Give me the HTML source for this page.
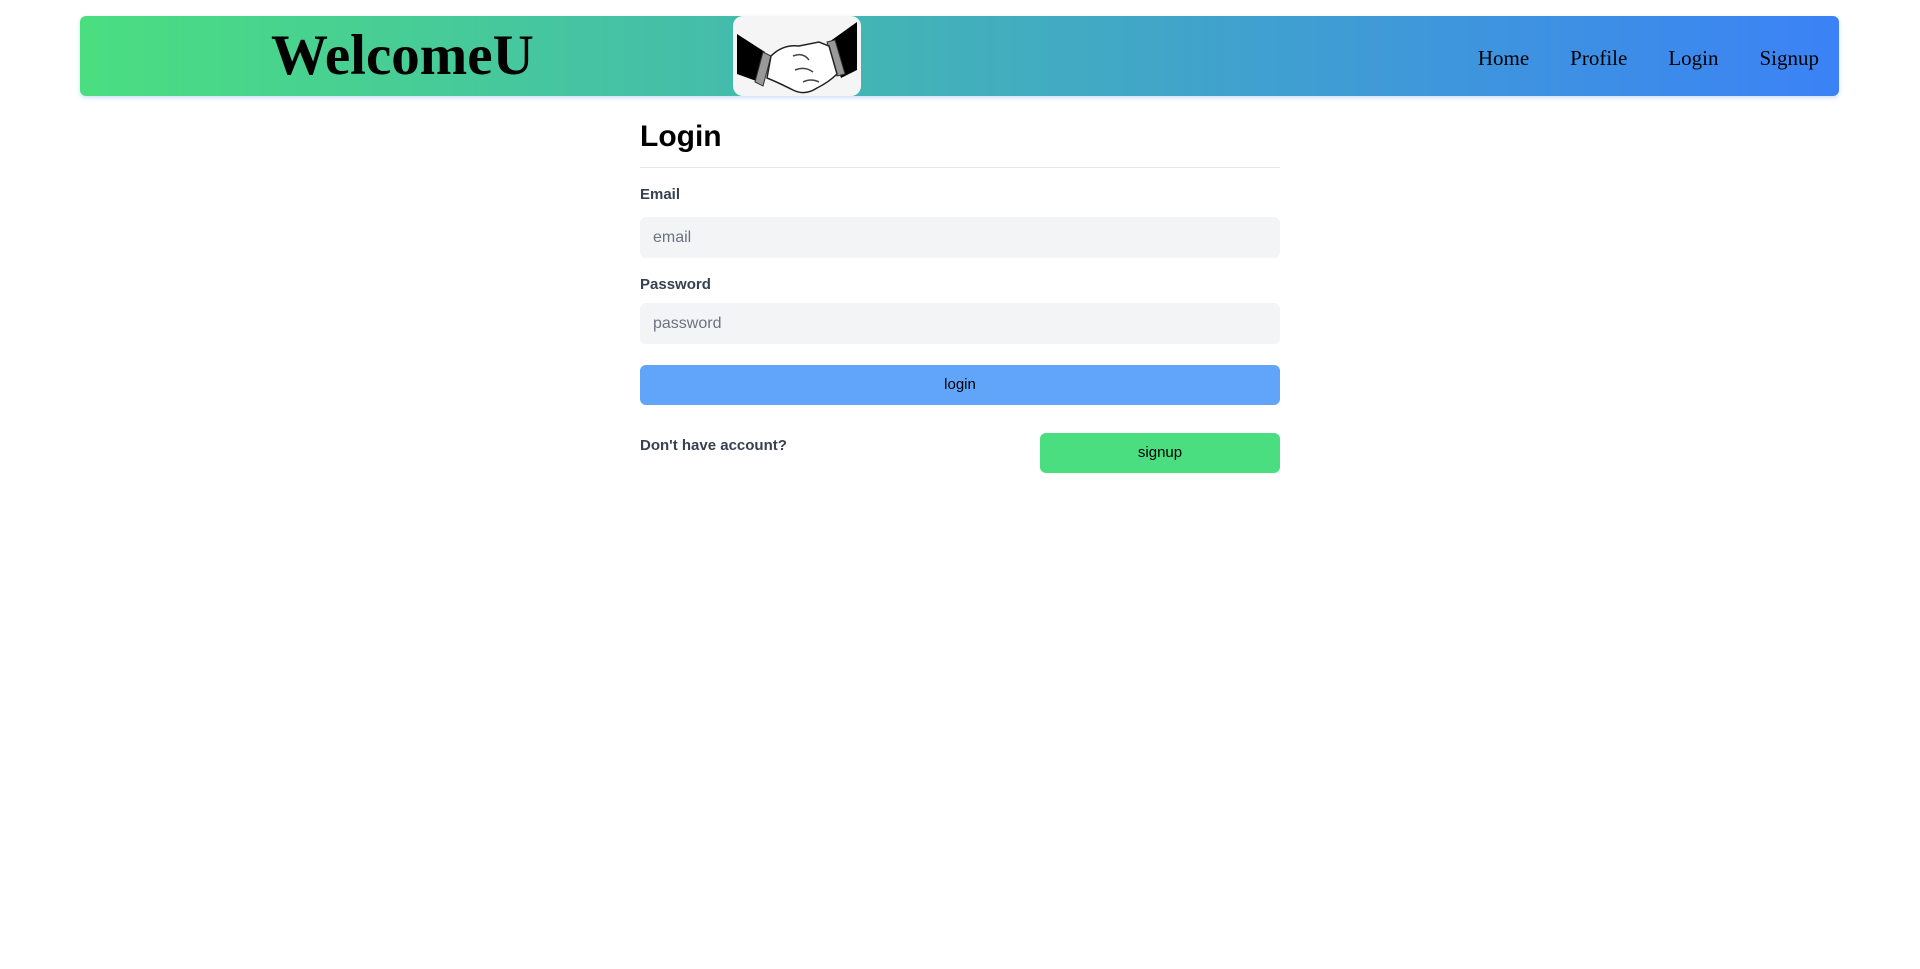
<!DOCTYPE html>
<html><head><meta charset="utf-8"><style>
*{box-sizing:border-box;margin:0;padding:0}
body{width:1920px;height:969px;background:#fff;position:relative;font-family:"Liberation Sans",sans-serif;overflow:hidden}
.hdr{position:absolute;left:80px;top:16px;width:1759px;height:80px;border-radius:6px;background:linear-gradient(90deg,#4ade80,#3b82f6);box-shadow:0 2px 4px rgba(59,130,246,.25)}
.brand{position:absolute;left:191px;top:0;line-height:80px;font-family:"Liberation Serif",serif;font-weight:bold;font-size:57px;color:#000}
.logo{position:absolute;left:653px;top:0;width:128px;height:80px;background:#f5f5f5;border-radius:10px;overflow:hidden}
.nav{position:absolute;right:20px;top:0;line-height:84px;font-family:"Liberation Serif",serif;font-size:21px;color:#000}
.nav span{margin-left:41px}
.abs{position:absolute}
.lbl{font-size:15px;font-weight:bold;color:#374151}
.inp{left:640px;width:640px;height:41px;background:#f3f4f6;border-radius:6px;color:#6b7280;font-size:16px;padding-left:13px;line-height:41px}
.btn{border-radius:6px;text-align:center;font-size:15px;color:#000}
</style></head><body>
<div class="hdr">
<div class="brand">WelcomeU</div>
<div class="logo"><svg width="128" height="80" viewBox="0 0 128 80">
<polygon points="4,18 32,36 26,66 4,58" fill="#000"/>
<polygon points="124,6 124,54 108,62 96,26" fill="#000"/>
<polygon points="30,36 38,40 30,70 22,66" fill="#999" stroke="#333"/>
<polygon points="94,26 102,24 112,58 104,60" fill="#999" stroke="#333"/>
<path d="M38,40 Q50,28 66,30 L86,26 L96,30 L104,58 Q96,66 84,72 Q72,80 60,74 Q44,66 34,62 Z" fill="#fff" stroke="#222" stroke-width="1.5"/>
<path d="M60,40 Q70,36 76,44 M62,54 Q72,50 80,56 M70,66 Q78,62 86,66" fill="none" stroke="#444" stroke-width="1.5"/>
</svg></div>
<div class="nav"><span>Home</span><span>Profile</span><span>Login</span><span>Signup</span></div>
</div>
<div class="abs" style="left:640px;top:120px;font-size:30px;font-weight:bold;color:#000">Login</div>
<div class="abs" style="left:640px;top:167px;width:640px;height:1px;background:#e5e7eb"></div>
<div class="abs lbl" style="left:640px;top:186px">Email</div>
<div class="abs inp" style="top:217px">email</div>
<div class="abs lbl" style="left:640px;top:276px">Password</div>
<div class="abs inp" style="top:303px">password</div>
<div class="abs btn" style="left:640px;top:365px;width:640px;height:40px;line-height:40px;background:#60a5fa">login</div>
<div class="abs lbl" style="left:640px;top:437px">Don't have account?</div>
<div class="abs btn" style="left:1040px;top:433px;width:240px;height:40px;line-height:40px;background:#4ade80">signup</div>
</body></html>
